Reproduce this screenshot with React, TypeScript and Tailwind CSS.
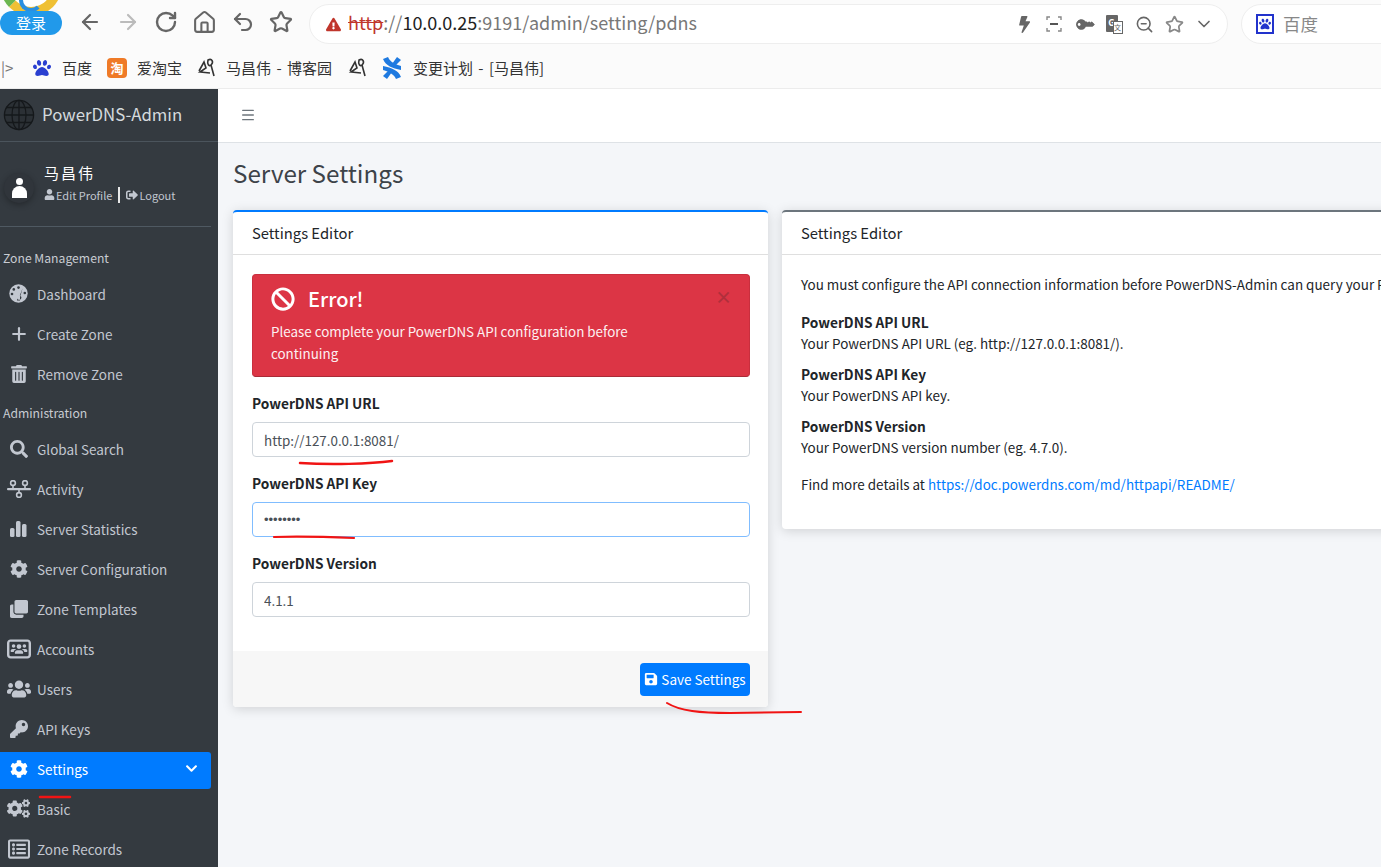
import React from "react";
import { ArrowLeft, ArrowRight, RotateCw, Home, Undo2, Star, ZoomOut, ChevronDown, Menu, Plus } from "lucide-react";
import {
  FaTrashAlt, FaSearch, FaClone, FaUsers, FaKey, FaCog, FaCogs, FaRegListAlt,
  FaBan, FaSave, FaUser, FaSignOutAlt, FaBolt, FaPaw, FaExclamationTriangle, FaChevronDown,
} from "react-icons/fa";
import { FaUsersRectangle } from "react-icons/fa6";

const GaugeIcon = () => (
  <svg width="19" height="19" viewBox="0 0 19 19">
    <circle cx="9.5" cy="9.5" r="9.2" fill="currentColor" />
    <circle cx="9.5" cy="3.6" r="1.3" fill="#343a40" />
    <circle cx="4.8" cy="5.4" r="1.3" fill="#343a40" />
    <circle cx="3" cy="10" r="1.3" fill="#343a40" />
    <circle cx="15.8" cy="9" r="1.3" fill="#343a40" />
    <path d="M13.6 4.2 L10.8 11.4 A2.2 2.2 0 1 1 8.2 14.4 L8 16.5 L11 16.5 L11 13.2 Z" fill="#343a40" />
  </svg>
);

const ActivityIcon = () => (
  <svg width="24" height="18" viewBox="0 0 24 18" fill="currentColor">
    <circle cx="6" cy="3" r="2.4" fill="none" stroke="currentColor" strokeWidth="1.6" />
    <circle cx="18" cy="3" r="2.4" fill="none" stroke="currentColor" strokeWidth="1.6" />
    <rect x="0" y="8" width="24" height="2.2" rx="1" />
    <rect x="5.2" y="5" width="1.6" height="3" />
    <rect x="17.2" y="5" width="1.6" height="3" />
    <rect x="11.2" y="10" width="1.6" height="3" />
    <circle cx="12" cy="15" r="2.4" fill="none" stroke="currentColor" strokeWidth="1.6" />
  </svg>
);

const BarsIcon = () => (
  <svg width="17" height="17" viewBox="0 0 17 17" fill="currentColor">
    <rect x="0" y="8" width="4.5" height="9" rx="1.5" />
    <rect x="6" y="1" width="4.5" height="16" rx="1.5" />
    <rect x="12" y="4" width="4.5" height="13" rx="1.5" />
  </svg>
);

const Globe = () => (
  <svg width="32" height="32" viewBox="0 0 32 32" fill="none" stroke="#15181b" strokeWidth="1.3">
    <circle cx="16" cy="16" r="14.6" fill="#2b3035" />
    <ellipse cx="16" cy="16" rx="7" ry="14.6" />
    <path d="M16 1.4V30.6M1.4 16H30.6M3.5 8.5H28.5M3.5 23.5H28.5" />
  </svg>
);

const BlogIcon = () => (
  <svg width="20" height="22" viewBox="0 0 20 22" fill="none" stroke="#333" strokeWidth="1.6">
    <path d="M2 14 L7 5 L9 11 L3 15 L13 16" />
    <path d="M11 3 C15 1 17 5 14 8 C12 10 10 7 11 3Z" />
    <path d="M14 8 L17 19" />
  </svg>
);

const BlueCross = () => (
  <svg width="20" height="22" viewBox="0 0 20 22" fill="#1f7ae0">
    <path d="M1 2 L6 0 C8 4 10 6 19 9 L19 13 C10 11 4 9 1 2Z" />
    <path d="M19 20 L14 22 C12 18 10 16 1 13 L1 9 C10 11 16 13 19 20Z" />
    <path d="M15 0 L19 3 L13 9 L10 7Z" />
    <path d="M5 22 L1 19 L7 13 L10 15Z" />
  </svg>
);

const ScanIcon = () => (
  <svg width="16" height="16" viewBox="0 0 16 16" fill="none" stroke="#888" strokeWidth="1.4">
    <path d="M1 4V1H4M12 1H15V4M15 12V15H12M4 15H1V12" />
    <rect x="4" y="7" width="8" height="2" fill="#555" stroke="none" />
  </svg>
);

const TranslateIcon = () => (
  <div className="relative w-[17px] h-[19px] flex">
    <div className="w-[12px] h-[17px] bg-[#666] rounded-[1px] text-white text-[9px] leading-[15px] text-center font-bold">G</div>
    <div className="absolute right-0 bottom-0 w-[10px] h-[13px] bg-white border border-[#666] text-[#666] text-[7px] leading-[11px] text-center">文</div>
  </div>
);

const ToolIcon = ({ children }: { children: React.ReactNode }) => (
  <div className="w-[30px] flex items-center justify-center">{children}</div>
);

const Item = ({ icon, label, active, chevron }: { icon: React.ReactNode; label: string; active?: boolean; chevron?: boolean }) => (
  <div className="h-[40px] pt-[2px] pb-px">
    <div className={`h-[37px] pb-[4px] flex items-center rounded-r-[3px] ${active ? "bg-[#007bff] text-white" : "text-[#c2c7d0]"}`}>
      <div className="w-[37px] flex items-center justify-center shrink-0 text-[18px]">{icon}</div>
      <span className="text-[13.5px] leading-[20px]">{label}</span>
      {chevron && <FaChevronDown className="ml-auto mr-[13px] text-[13px]" />}
    </div>
  </div>
);

const Section = ({ label }: { label: string }) => (
  <div className="h-[26px] pl-[3px] mb-[4px] text-[#c8ccd2] text-[12.2px] leading-[26px]">{label}</div>
);

const Field = ({ label, value, type = "text", focus, top }: { label: string; value: string; type?: string; focus?: boolean; top: string }) => (
  <div className={top}>
    <label className="block font-bold text-[13.7px] leading-[20px] text-[#212529] mb-[9px]">{label}</label>
    <input
      readOnly
      type={type}
      value={value}
      className={`block w-full h-[35px] px-[11px] bg-white rounded-[4px] border text-[#495057] outline-none ${type === "password" ? "text-[13px] font-['Liberation_Sans',sans-serif]" : "text-[13.4px]"} ${focus ? "border-[#80bdff]" : "border-[#ced4da]"}`}
    />
  </div>
);

const InfoBlock = ({ title, text }: { title: string; text: string }) => (
  <div className="mt-[10px]">
    <div className="font-bold text-[13.7px] leading-[21px]">{title}</div>
    <div className="text-[13.45px] leading-[21px]">{text}</div>
  </div>
);

export default function App() {
  return (
    <div className="relative w-[1381px] h-[867px] overflow-hidden flex flex-col bg-[#f4f6f9] text-[#212529] font-['Noto_Sans_CJK_SC','Liberation_Sans',sans-serif]">
      {/* browser toolbar */}
      <div className="h-[44px] shrink-0 bg-[#fbfbfb] flex items-center relative">
        <div className="w-[64px] h-[44px] relative overflow-hidden shrink-0">
          <div className="absolute left-0 top-[-46px] w-[62px] h-[62px] rounded-full border-[9px] border-t-[#e8b93a] border-r-[#efc034] border-b-[#efc034] border-l-[#6bb64f] bg-white" />
          <div className="absolute left-[19px] top-[-12px] w-[24px] h-[24px] rounded-full border-[4px] border-[#2a8fe0] border-r-transparent" />
          <div className="absolute left-0 top-[11px] w-[62px] h-[24px] rounded-full bg-[#2199ea] text-white text-[15px] leading-[24px] text-center">登录</div>
        </div>
        <div className="flex items-center text-[#666] gap-[14px] ml-[14px]">
          <ArrowLeft size={24} strokeWidth={2.2} />
          <ArrowRight size={24} strokeWidth={2.2} className="text-[#bbb]" />
          <RotateCw size={24} strokeWidth={2.4} />
          <Home size={25} strokeWidth={2} />
          <Undo2 size={24} strokeWidth={2.2} />
          <Star size={24} strokeWidth={2.2} />
        </div>
        <div className="absolute left-[309px] top-[4px] w-[919px] h-[40px] bg-white rounded-full border border-[#eeeeee] flex items-center pl-[16px] pr-[8px]">
          <FaExclamationTriangle className="text-[#c0362c] text-[15px] mr-[7px]" />
          <span className="text-[18px] leading-[24px] mb-[5px] text-[#777] whitespace-nowrap">
            <span className="text-[#c0362c] line-through">http</span>://<span className="text-[#222]">10.0.0.25</span>:9191/admin/setting/pdns
          </span>
          <div className="ml-auto flex items-center text-[#666]">
            <ToolIcon><FaBolt className="text-[17px] -skew-x-6" /></ToolIcon>
            <ToolIcon><ScanIcon /></ToolIcon>
            <ToolIcon><FaKey className="text-[15px] -rotate-[135deg]" /></ToolIcon>
            <ToolIcon><TranslateIcon /></ToolIcon>
            <ToolIcon><ZoomOut size={19} /></ToolIcon>
            <ToolIcon><Star size={19} className="text-[#888]" strokeWidth={2.2} /></ToolIcon>
            <ToolIcon><ChevronDown size={20} /></ToolIcon>
          </div>
        </div>
        <div className="absolute left-[1241px] top-[4px] w-[160px] h-[40px] bg-white rounded-l-full border border-[#eeeeee] flex items-center pl-[14px]">
          <div className="w-[18px] h-[20px] border-2 border-[#2233cc] bg-white flex items-center justify-center text-[#2233cc] text-[12px]"><FaPaw /></div>
          <span className="ml-[9px] text-[17.5px] text-[#888]">百度</span>
        </div>
      </div>

      {/* bookmarks */}
      <div className="h-[45px] shrink-0 bg-[#fbfbfb] border-b border-[#ececec] flex items-center pl-[1px] pt-[3px] text-[15px] leading-[22px] text-[#333] [word-spacing:2px]">
        <span className="w-[32px] shrink-0 text-[#777] text-[15px]">|&gt;</span>
        <FaPaw className="text-[#2a3fd0] text-[18px]" />
        <span className="ml-[11px]">百度</span>
        <div className="ml-[15px] w-[20px] h-[20px] rounded-[4px] bg-[#ef7a27] text-white text-[13px] leading-[20px] text-center font-bold">淘</div>
        <span className="ml-[10px]">爱淘宝</span>
        <div className="ml-[15px]"><BlogIcon /></div>
        <span className="ml-[9px]">马昌伟 - 博客园</span>
        <div className="ml-[16px]"><BlogIcon /></div>
        <div className="ml-[14px]"><BlueCross /></div>
        <span className="ml-[11px]">变更计划 - [马昌伟]</span>
      </div>

      <div className="flex flex-1 min-h-0">
        {/* sidebar */}
        <aside className="w-[218px] shrink-0 bg-[#343a40] overflow-hidden">
          <div className="h-[53px] border-b border-[#4b545c] flex items-center pl-[3px]">
            <Globe />
            <span className="ml-[7px] mb-[2px] text-[16.8px] leading-[24px] text-[#d5dade]">PowerDNS-Admin</span>
          </div>
          <div className="mr-[7px]">
            <div className="h-[85px] border-b border-[#4f5962] flex items-center pl-[4px]">
              <div className="w-[30px] h-[30px] rounded-full bg-[#30353b] shadow-[0_2px_6px_rgba(0,0,0,0.3)] flex flex-col items-center justify-center shrink-0 mt-[8px]">
                <div className="w-[7px] h-[7px] rounded-full bg-white" />
                <div className="w-[15px] h-[12px] mt-[1px] rounded-t-[8px] bg-white" />
              </div>
              <div className="ml-[10px] mb-[3px]">
                <div className="text-[15px] leading-[20px] text-white tracking-[2px]">马昌伟</div>
                <div className="mt-[4px] flex items-center text-[11px] leading-[16px] text-[#c2c7d0]">
                  <FaUser className="text-[11px] mr-px" />
                  <span>Edit Profile</span>
                  <span className="w-[2px] h-[16px] bg-[#e8e8e8] mx-[6px]" />
                  <FaSignOutAlt className="text-[12px] mr-px" />
                  <span>Logout</span>
                </div>
              </div>
            </div>
            <div className="mt-[18px]">
              <Section label="Zone Management" />
              <Item icon={<GaugeIcon />} label="Dashboard" />
              <Item icon={<Plus size={20} strokeWidth={2.6} />} label="Create Zone" />
              <Item icon={<FaTrashAlt />} label="Remove Zone" />
            </div>
            <div className="mt-[5px]">
              <Section label="Administration" />
              <Item icon={<FaSearch />} label="Global Search" />
              <Item icon={<ActivityIcon />} label="Activity" />
              <Item icon={<BarsIcon />} label="Server Statistics" />
              <Item icon={<FaCog />} label="Server Configuration" />
              <Item icon={<FaClone />} label="Zone Templates" />
              <Item icon={<FaUsersRectangle size={24} />} label="Accounts" />
              <Item icon={<FaUsers size={24} />} label="Users" />
              <Item icon={<FaKey />} label="API Keys" />
              <Item icon={<FaCog />} label="Settings" active chevron />
              <Item icon={<FaCogs size={23} />} label="Basic" />
              <Item icon={<FaRegListAlt size={22} />} label="Zone Records" />
            </div>
          </div>
        </aside>

        {/* main */}
        <main className="flex-1 min-w-0 overflow-hidden flex flex-col">
          <div className="h-[54px] shrink-0 bg-white border-b border-[#dee2e6] flex items-center pl-[22px] pb-[2px] text-[#6d757c]">
            <Menu size={16} strokeWidth={2} />
          </div>
          <div className="px-[15px]">
            <h1 className="h-[67px] pt-[12px] text-[24.2px] leading-[36px] text-[#3d4349]">Server Settings</h1>
            <div className="flex gap-[14px] items-start">
              {/* left card */}
              <section className="w-[535px] shrink-0 bg-white rounded-[4px] border-t-2 border-[#007bff] shadow-[0_2px_12px_rgba(0,0,0,0.15)]">
                <div className="h-[43px] border-b border-[#dfdfdf] pl-[19px] flex items-center text-[14.8px]">Settings Editor</div>
                <div className="pl-[19px] pr-[18px] pt-[19px] h-[396px]">
                  <div className="relative h-[103px] bg-[#dc3545] rounded-[4px] border border-[#c92f3e] border-b-[#a92b37] text-white pl-[18px] pr-[100px] pt-[10px]">
                    <div className="flex items-center h-[28px]">
                      <FaBan className="text-[24px]" />
                      <span className="ml-[13px] text-[20px] leading-[28px] font-medium">Error!</span>
                    </div>
                    <p className="mt-[7px] text-[13.4px] leading-[22px] text-[#fdf0f1]">Please complete your PowerDNS API configuration before continuing</p>
                    <span className="absolute right-[17px] top-[10px] text-[17px] leading-[24px] font-bold text-[#b02f3b]">×</span>
                  </div>
                  <Field top="mt-[16px]" label="PowerDNS API URL" value="http://127.0.0.1:8081/" />
                  <Field top="mt-[16px]" label="PowerDNS API Key" value="password" type="password" focus />
                  <Field top="mt-[16px]" label="PowerDNS Version" value="4.1.1" />
                </div>
                <div className="h-[56px] bg-[#f7f7f7] rounded-b-[4px] flex items-center justify-end pr-[18px]">
                  <button className="w-[110px] h-[33px] bg-[#007bff] rounded-[4px] text-white text-[13.5px] flex items-center justify-center gap-[3px]">
                    <FaSave className="text-[14px]" />
                    <span>Save Settings</span>
                  </button>
                </div>
              </section>

              {/* right card */}
              <section className="w-[760px] shrink-0 bg-white rounded-[4px] border-t-2 border-[#6c757d] shadow-[0_2px_12px_rgba(0,0,0,0.15)]">
                <div className="h-[43px] border-b border-[#dfdfdf] pl-[19px] flex items-center text-[14.8px]">Settings Editor</div>
                <div className="px-[19px] pt-[19px] h-[274px] text-[13.45px] leading-[21px] whitespace-nowrap">
                  <p>You must configure the API connection information before PowerDNS-Admin can query your PowerDNS server.</p>
                  <div className="mt-[17px]">
                    <InfoBlock title="PowerDNS API URL" text="Your PowerDNS API URL (eg. http://127.0.0.1:8081/)." />
                    <InfoBlock title="PowerDNS API Key" text="Your PowerDNS API key." />
                    <InfoBlock title="PowerDNS Version" text="Your PowerDNS version number (eg. 4.7.0)." />
                  </div>
                  <p className="mt-[16px]">Find more details at <a className="text-[#007bff]">https://doc.powerdns.com/md/httpapi/README/</a></p>
                </div>
              </section>
            </div>
          </div>
        </main>
      </div>

      {/* hand-drawn annotations over the screenshot */}
      <svg className="absolute left-0 top-0 pointer-events-none" width="1381" height="867" fill="none" stroke="#f01414" strokeLinecap="round">
        <path d="M300 463 C330 465 370 464 392 461" strokeWidth="2.5" />
        <path d="M274 537 C300 536 330 537 354 538" strokeWidth="2.2" />
        <path d="M667 703 C680 711 700 713 730 713 L801 712" strokeWidth="2" />
        <path d="M40 797 L70 797" strokeWidth="2.5" />
      </svg>
    </div>
  );
}
